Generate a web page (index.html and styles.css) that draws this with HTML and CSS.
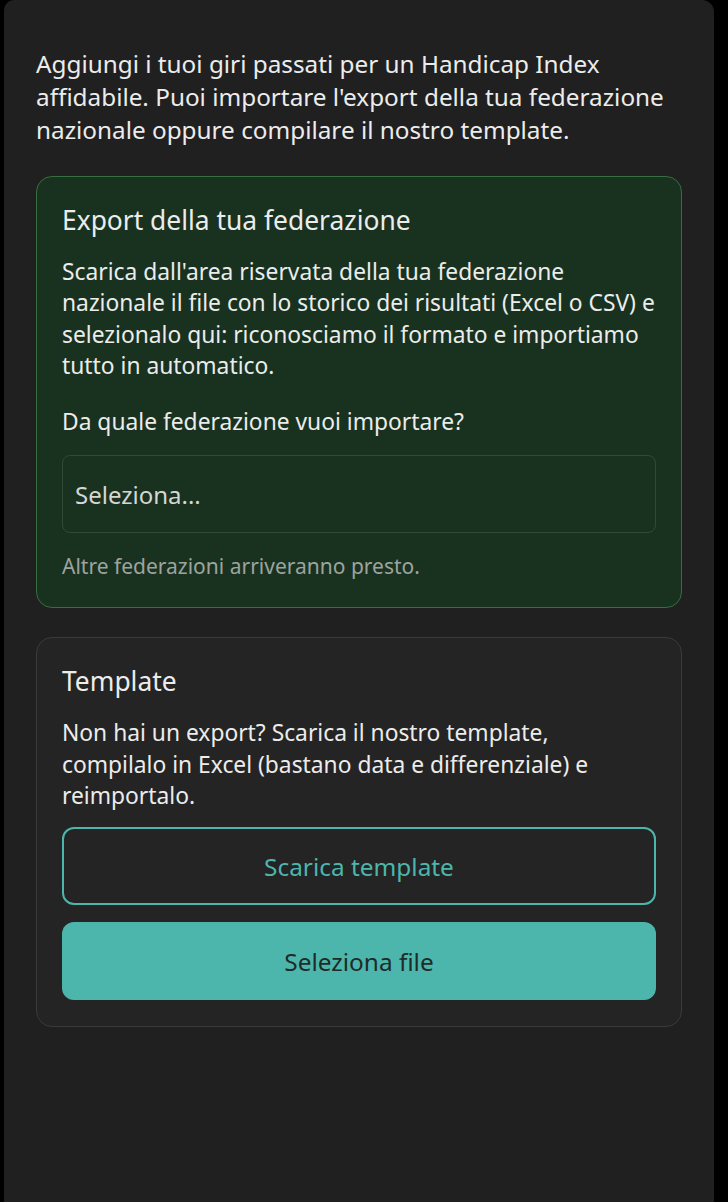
FILE: index.html
```html
<!DOCTYPE html>
<html lang="it">
<head>
    <meta charset="UTF-8">
    <meta name="viewport" content="width=device-width, initial-scale=1.0">
    <title>Importa giri</title>
    <link rel="stylesheet" href="styles.css">
</head>
<body>
    <div class="sheet">
        <p class="intro">Aggiungi i tuoi giri passati per un Handicap Index affidabile. Puoi importare l'export della tua federazione nazionale oppure compilare il nostro template.</p>

        <div class="card card-federation">
            <h2 class="card-title">Export della tua federazione</h2>
            <p class="card-text">Scarica dall'area riservata della tua federazione nazionale il file con lo storico dei risultati (Excel o CSV) e selezionalo qui: riconosciamo il formato e importiamo tutto in automatico.</p>
            <p class="card-text question">Da quale federazione vuoi importare?</p>
            <div class="select">Seleziona...</div>
            <p class="hint">Altre federazioni arriveranno presto.</p>
        </div>

        <div class="card card-template">
            <h2 class="card-title">Template</h2>
            <p class="card-text">Non hai un export? Scarica il nostro template, compilalo in Excel (bastano data e differenziale) e reimportalo.</p>
            <div class="btn btn-outline">Scarica template</div>
            <div class="btn btn-filled">Seleziona file</div>
        </div>
    </div>
</body>
</html>
```

FILE: styles.css
```css
body {
    margin: 0;
    background-color: #000;
    font-family: "Noto Sans", "Open Sans", sans-serif;
    color: #ececec;
}
.sheet {
    margin: 0 14px 0 4px;
    min-height: 1202px;
    box-sizing: border-box;
    padding: 47px 32px 0 32px;
    background-color: #202020;
    border-radius: 10px 12px 0 0;
}
.intro {
    margin: 0 0 30px 0;
    font-size: 24.3px;
    line-height: 33px;
}
.card {
    border-radius: 16px;
    padding: 25px 25px 26px 25px;
    margin-bottom: 29px;
}
.card-federation {
    background-color: #18321f;
    border: 1.5px solid #376d40;
}
.card-template {
    background-color: #242424;
    border: 1.5px solid #3a3a3a;
}
.card-title {
    margin: 0 0 18px 0;
    font-size: 26.4px;
    font-weight: 400;
    line-height: 36px;
}
.card-text {
    margin: 0;
    font-size: 22.8px;
    line-height: 31.3px;
}
.question {
    margin-top: 25px;
}
.select {
    margin-top: 18px;
    height: 78px;
    box-sizing: border-box;
    padding: 0 12px;
    display: flex;
    align-items: center;
    border: 1px solid #2f4b35;
    border-radius: 8px;
    font-size: 24px;
    color: #d6d6d6;
}
.hint {
    margin: 18px 0 0 0;
    font-size: 21px;
    line-height: 30px;
    color: #9ea39f;
}
.btn {
    height: 78px;
    box-sizing: border-box;
    display: flex;
    justify-content: center;
    align-items: center;
    border-radius: 12px;
    font-size: 24.4px;
}
.btn-outline {
    margin-top: 16px;
    border: 2px solid #4db6ac;
    color: #4db6ac;
}
.btn-filled {
    margin-top: 17px;
    background-color: #4db6ac;
    color: #1d2b2a;
}
```
